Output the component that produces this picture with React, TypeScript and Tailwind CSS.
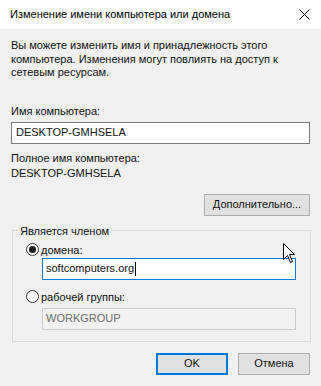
import React from "react";

function Radio({ checked }: { checked: boolean }) {
  return (
    <div className="w-[13px] h-[13px] rounded-full border border-[#333333] bg-white flex items-center justify-center shrink-0">
      {checked && <div className="w-[7px] h-[7px] rounded-full bg-[#1a1a1a]" />}
    </div>
  );
}

export default function App() {
  return (
    <div
      className="relative w-[321px] h-[386px] bg-[#f0f0f0] text-[#111111] overflow-hidden text-[11px]"
      style={{ fontFamily: '"Liberation Sans", Arial, sans-serif' }}
    >
      {/* Title bar */}
      <div className="h-[29px] bg-white flex items-center justify-between pl-[10px] pr-[10px]">
        <span className="text-[11px] text-black">Изменение имени компьютера или домена</span>
        <svg width="11" height="11" viewBox="0 0 11 11" className="mr-[1px]">
          <path d="M0.5 0.5 L10.5 10.5 M10.5 0.5 L0.5 10.5" stroke="#000" strokeWidth="1" />
        </svg>
      </div>

      {/* Body */}
      <div className="flex flex-col px-[11px]">
        <p className="mt-[10px] leading-[13.5px] whitespace-nowrap">
          Вы можете изменить имя и принадлежность этого
          <br />
          компьютера. Изменения могут повлиять на доступ к
          <br />
          сетевым ресурсам.
        </p>

        <div className="mt-[25px] leading-[13px]">Имя компьютера:</div>
        <div className="mt-[4px] h-[22px] w-[299px] border border-[#7a7a7a] bg-white flex items-center pl-[4px]">
          DESKTOP-GMHSELA
        </div>

        <div className="mt-[8px] leading-[13px]">Полное имя компьютера:</div>
        <div className="mt-[1px] leading-[14px]">DESKTOP-GMHSELA</div>

        <div className="flex justify-end mt-[14px] w-[299px]">
          <div className="h-[22px] w-[106px] border border-[#adadad] bg-[#e1e1e1] flex items-center justify-center">
            Дополнительно...
          </div>
        </div>

        <fieldset className="mt-[8px] w-[299px] h-[118px] border border-[#dcdcdc] p-0 ml-[1px]">
          <legend className="ml-[5px] px-[2px] leading-[14px]">Является членом</legend>
          <div className="pl-[13px]">
            <div className="flex items-center gap-[2px] mt-[5px]">
              <Radio checked={true} />
              <span className="leading-[14px]">домена:</span>
            </div>
            <div className="mt-[1px] ml-[16px] h-[22px] w-[254px] border border-[#0078d7] bg-white flex items-center pl-[3px]">
              <span>softcomputers.org</span>
              <span className="inline-block w-[1px] h-[14px] bg-black ml-[1px]" />
            </div>
            <div className="flex items-center gap-[2px] mt-[10px]">
              <Radio checked={false} />
              <span className="leading-[14px]">рабочей группы:</span>
            </div>
            <div className="mt-[4px] ml-[16px] h-[22px] w-[254px] border border-[#cccccc] bg-[#f2f2f2] flex items-center pl-[3px] text-[#6d6d6d]">
              WORKGROUP
            </div>
          </div>
        </fieldset>

        <div className="flex justify-end gap-[10px] mt-[11px] w-[299px]">
          <div className="h-[22px] w-[72px] border-2 border-[#0078d7] bg-[#e1e1e1] flex items-center justify-center">
            OK
          </div>
          <div className="h-[22px] w-[72px] border border-[#adadad] bg-[#e1e1e1] flex items-center justify-center">
            Отмена
          </div>
        </div>
      </div>

      {/* Mouse cursor */}
      <svg
        className="absolute left-[283px] top-[243px]"
        width="13"
        height="21"
        viewBox="0 0 13 21"
      >
        <path
          d="M0.5 0.5 L0.5 16.5 L4.5 12.5 L7.5 19.5 L9.5 18.5 L6.5 11.5 L11.5 11.5 Z"
          fill="#fff"
          stroke="#000"
          strokeWidth="1"
          strokeLinejoin="miter"
        />
      </svg>
    </div>
  );
}
